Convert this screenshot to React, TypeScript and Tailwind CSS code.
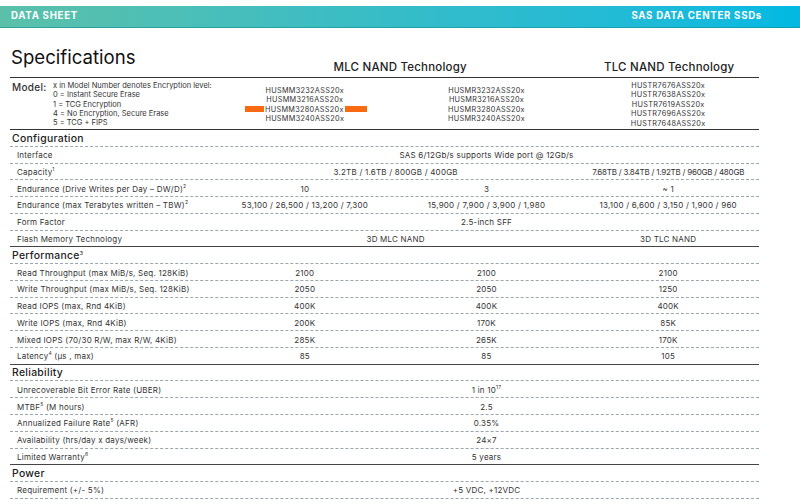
const pageFont = { fontFamily: 'Inter, "Liberation Sans", sans-serif' }

type Row = { label: React.ReactNode; values: React.ReactNode[] }
type Section = { title: React.ReactNode; rows: Row[] }

const sup = (s: string) => <sup className="text-[5px] align-[1.5px] leading-none">{s}</sup>

const sections: Section[] = [
  {
    title: 'Configuration',
    rows: [
      { label: 'Interface', values: ['SAS 6/12Gb/s supports Wide port @ 12Gb/s'] },
      { label: <>Capacity{sup('1')}</>, values: ['3.2TB / 1.6TB / 800GB / 400GB', '', <span className="tracking-[-0.23px]">7.68TB / 3.84TB / 1.92TB / 960GB / 480GB</span>] },
      { label: <>Endurance (Drive Writes per Day – DW/D){sup('2')}</>, values: ['10', '3', '~ 1'] },
      { label: <>Endurance (max Terabytes written – TBW){sup('2')}</>, values: ['53,100 / 26,500 / 13,200 / 7,300', '15,900 / 7,900 / 3,900 / 1,980', '13,100 / 6,600 / 3,150 / 1,900 / 960'] },
      { label: 'Form Factor', values: ['2.5-inch SFF'] },
      { label: 'Flash Memory Technology', values: ['3D MLC NAND', '', '3D TLC NAND'] },
    ],
  },
  {
    title: <>Performance{sup('3')}</>,
    rows: [
      { label: 'Read Throughput (max MiB/s, Seq. 128KiB)', values: ['2100', '2100', '2100'] },
      { label: 'Write Throughput (max MiB/s, Seq. 128KiB)', values: ['2050', '2050', '1250'] },
      { label: 'Read IOPS (max, Rnd 4KiB)', values: ['400K', '400K', '400K'] },
      { label: 'Write IOPS (max, Rnd 4KiB)', values: ['200K', '170K', '85K'] },
      { label: 'Mixed IOPS (70/30 R/W, max R/W, 4KiB)', values: ['285K', '265K', '170K'] },
      { label: <>Latency{sup('4')} (µs , max)</>, values: ['85', '85', '105'] },
    ],
  },
  {
    title: 'Reliability',
    rows: [
      { label: 'Unrecoverable Bit Error Rate (UBER)', values: [<>1 in 10{sup('17')}</>] },
      { label: <>MTBF{sup('5')} (M hours)</>, values: ['2.5'] },
      { label: <>Annualized Failure Rate{sup('5')} (AFR)</>, values: ['0.35%'] },
      { label: 'Availability (hrs/day x days/week)', values: ['24×7'] },
      { label: <>Limited Warranty{sup('6')}</>, values: ['5 years'] },
    ],
  },
  {
    title: 'Power',
    rows: [{ label: 'Requirement (+/- 5%)', values: ['+5 VDC, +12VDC'] }],
  },
]

const mlc = ['HUSMM3232ASS20x', 'HUSMM3216ASS20x', 'HUSMM3280ASS20x', 'HUSMM3240ASS20x']
const mlcR = ['HUSMR3232ASS20x', 'HUSMR3216ASS20x', 'HUSMR3280ASS20x', 'HUSMR3240ASS20x']
const tlc = ['HUSTR7676ASS20x', 'HUSTR7638ASS20x', 'HUSTR7619ASS20x', 'HUSTR7696ASS20x', 'HUSTR7648ASS20x']
const levels = ['x in Model Number denotes Encryption level:', '0 = Instant Secure Erase', '1 = TCG Encryption', '4 = No Encryption, Secure Erase', '5 = TCG + FIPS']

function ModelList({ items, highlight }: { items: string[]; highlight?: string }) {
  return (
    <div className="flex flex-col items-center justify-center pt-[2px] text-[7.3px] leading-[9.35px] tracking-[0.3px]">
      {items.map((m) => (
        <div key={m} className={`flex items-center gap-px whitespace-nowrap ${m === highlight ? 'ml-[2px]' : ''}`}>
          {m === highlight && <span className="w-[19px] h-[6px] bg-[#f96a12]" />}
          <span>{m}</span>
          {m === highlight && <span className="w-[22px] h-[6px] bg-[#f96a12]" />}
        </div>
      ))}
    </div>
  )
}

function SpecRow({ row, last }: { row: Row; last: boolean }) {
  return (
    <div className={`grid grid-cols-[204px_repeat(3,1fr)] h-[16.77px] items-center pt-px text-[8px] tracking-[0.22px] text-[#333] ${last ? 'border-b border-[#444]' : 'border-b border-dashed border-[#9aa6ad]'}`}>
      <div className="pl-[7px] whitespace-nowrap">{row.label}</div>
      {row.values.length === 1 ? (
        <div className="col-span-3 text-center">{row.values[0]}</div>
      ) : (
        row.values.map((v, i) =>
          i === 1 && v === '' ? null : (
            <div key={i} className={`text-center whitespace-nowrap ${i === 0 && row.values[1] === '' ? 'col-span-2' : ''}`}>
              {v}
            </div>
          ),
        )
      )}
    </div>
  )
}

export default function App() {
  return (
    <div className="w-[800px] h-[504px] overflow-hidden bg-white pt-[6px] text-[#222]" style={pageFont}>
      <div className="h-[22px] flex items-center justify-between pl-[11px] pr-[38px] bg-gradient-to-r from-[#5ac0a9] via-[#35bcc8] to-[#00b9e2] border-b border-[#0f8f8f]/60 text-white font-bold text-[9.7px] tracking-[0.7px]">
        <span>DATA SHEET</span>
        <span>SAS DATA CENTER SSDs</span>
      </div>

      <div className="w-[749px] ml-[10px]">
        <div className="h-[50px] grid grid-cols-[204px_repeat(3,1fr)] items-end border-b border-[#333]">
          <h1 className="text-[18.6px] leading-none mb-[10px] ml-px text-[#111] whitespace-nowrap">Specifications</h1>
          <div className="col-span-2 text-center text-[11.5px] font-medium leading-none mb-[4px] ml-[9px] tracking-[0.2px]">MLC NAND Technology</div>
          <div className="text-center text-[11.5px] font-medium leading-none mb-[4px] ml-[2px] tracking-[0.2px]">TLC NAND Technology</div>
        </div>

        <div className="h-[52px] grid grid-cols-[204px_repeat(3,1fr)] border-b border-[#333] text-[#333]">
          <div className="flex">
            <div className="text-[10px] font-medium leading-none pt-[4px] pl-[2px] w-[43px] tracking-[0.3px]">Model:</div>
            <div className="text-[7.5px] leading-[9.35px] pt-[3px] whitespace-nowrap">
              {levels.map((l) => (
                <div key={l}>{l}</div>
              ))}
            </div>
          </div>
          <ModelList items={mlc} highlight="HUSMM3280ASS20x" />
          <ModelList items={mlcR} />
          <ModelList items={tlc} />
        </div>

        {sections.map((s, si) => (
          <div key={si}>
            <div className="h-[16.77px] flex items-center pl-[2px] pt-px text-[10.4px] font-medium tracking-[0.3px] border-b border-dashed border-[#9aa6ad]">
              <span>{s.title}</span>
            </div>
            {s.rows.map((r, i) => (
              <SpecRow key={i} row={r} last={i === s.rows.length - 1 && si < sections.length - 1} />
            ))}
          </div>
        ))}
      </div>
    </div>
  )
}
